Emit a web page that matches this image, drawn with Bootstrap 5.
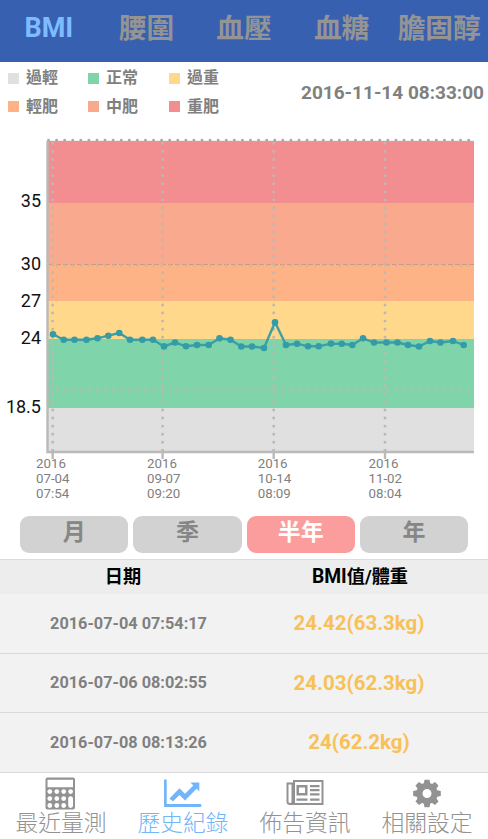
<!DOCTYPE html>
<html lang="zh-Hant">
<head>
<meta charset="utf-8">
<meta name="viewport" content="width=device-width, initial-scale=1">
<title>BMI</title>
<link href="https://cdn.jsdelivr.net/npm/bootstrap@5.3.0/dist/css/bootstrap.min.css" rel="stylesheet">
<style>
body{font-family:Roboto,"Noto Sans CJK TC",sans-serif;background:#fff;color:#808080;height:839px;overflow:hidden}
.top-tabs{height:62px;background:#3860b1;font-size:27.7px;line-height:57px}
.top-tabs .nav-link{width:97.7px;color:#949494;font-weight:700;padding:0}
.top-tabs .nav-link.active{color:#7dbcff;font-size:27px}
.info{height:68px}
.legend{display:grid;grid-template-columns:80px 81px 60px;grid-auto-rows:28.5px;padding:2px 0 0 8px;font-size:16px;font-weight:700}
.swatch{width:11px;height:11px;margin-right:7px}
.swatch.under{background:#e0e0e0}
.swatch.normal{background:#80d4a9}
.swatch.over{background:#ffd88b}
.swatch.mild{background:#fdb385}
.swatch.moderate{background:#f9aa8e}
.swatch.severe{background:#f28d90}
.stamp{font-size:19px;padding-right:4px;padding-top:17px}
.chart{height:380px}
.range{height:49px;padding:6px 20px 0;gap:5px}
.range .btn{width:108.5px;height:37px;border-radius:9px;background:#d2d2d2;color:#868686;font-size:23px;font-weight:700;line-height:28px;padding:0 0 3px;border:0}
.range .btn.active{background:#fb9d9d;color:#fff}
.list-head{height:35px;background:#ededed;border-top:1px solid #d9dddd;color:#000;font-size:18.2px;font-weight:700;line-height:33px}
.head-day{width:246px}
.head-val{width:242px;padding-right:14px}
.latin{font-size:19.3px}
.entry{height:59.5px;background:#f2f2f2;border-bottom:1px solid #d9d9d9;padding-top:1px}
.day{width:246px;padding-left:11px;font-size:16.3px;font-weight:700}
.val{width:242px;padding-right:16px;font-size:20.5px;font-weight:700;color:#f8c157}
.tabbar{height:67px;font-size:22.8px;font-weight:300;line-height:27px}
.tabbar a{width:122px;color:#929292;text-decoration:none;padding-top:4px}
.tabbar a.active{color:#72b6f9}
.tabbar svg{width:40px;height:33px;display:block}
</style>
</head>
<body>
<nav class="top-tabs nav flex-nowrap text-center text-nowrap">
<a class="nav-link active" href="#">BMI</a><a class="nav-link" href="#">腰圍</a><a class="nav-link" href="#">血壓</a><a class="nav-link" href="#">血糖</a><a class="nav-link" href="#">膽固醇</a>
</nav>
<section class="info d-flex justify-content-between">
<div class="legend">
<div class="d-flex align-items-center"><span class="swatch under"></span>過輕</div>
<div class="d-flex align-items-center"><span class="swatch normal"></span>正常</div>
<div class="d-flex align-items-center"><span class="swatch over"></span>過重</div>
<div class="d-flex align-items-center"><span class="swatch mild"></span>輕肥</div>
<div class="d-flex align-items-center"><span class="swatch moderate"></span>中肥</div>
<div class="d-flex align-items-center"><span class="swatch severe"></span>重肥</div>
</div>
<div class="stamp fw-bold text-nowrap">2016-11-14 08:33:00</div>
</section>
<svg class="chart d-block w-100" viewBox="0 130 488 380">
<g shape-rendering="crispEdges">
<path fill="#f28d90" d="M48 141h426v62H48z"/>
<path fill="#f9aa8e" d="M48 203h426v61H48z"/>
<path fill="#fdb385" d="M48 264h426v37H48z"/>
<path fill="#ffd88b" d="M48 301h426v38H48z"/>
<path fill="#80d4a9" d="M48 339h426v69H48z"/>
<path fill="#e0e0e0" d="M48 408h426v43H48z"/>
</g>
<path d="M47 141.3H474" stroke="#b5adad"/>
<path d="M49 264.5H474" stroke="#c48f78" stroke-dasharray="5 2" stroke-width=".8"/>
<g fill="none" stroke="#bcb8b4" stroke-width="2.9" stroke-linecap="round" stroke-dasharray="0.01 8.07">
<path d="M48.5 140.3H474" stroke="#a9a9a9"/>
<path d="M56.8 265.500H474" stroke-opacity=".7"/>
<path d="M56.8 389.800H474" stroke="#b5bdae"/>
<path d="M52.7 450.4V141M162.6 450.4V141M273.7 450.4V141M385 450.4V141"/>
</g>
<path d="M47.5 141V452H474" fill="none" stroke="#bababa" stroke-width="2.4"/>
<path d="M52.7 449v10M162.6 449v10M273.7 449v10M385 449v10" stroke="#bababa" stroke-width="2.4"/>
<polyline id="line" fill="none" stroke="#3d9ea3" stroke-width="2.4" stroke-linejoin="round" points="53,334.2 63.7,339.7 74.5,339.7 86.5,339.7 97.5,338.3 108.3,335.7 119.3,333 130,339.7 142.3,339.7 153,339.7 164,346.4 175,342.5 186,346.3 197,345 208.7,345 219.5,338.3 230.5,339.7 241.3,346.5 252,346.5 264,348 275,322.3 286,345 297,343.7 308,346.3 318.7,346.3 331,343.6 341.7,343.7 352.3,345 363,338.3 374,342.5 386.5,342.5 397.5,342.5 408,345 419,346.5 430,341 440.5,342.5 453,341 463.7,345"/>
<g id="dots" fill="#349ba8"></g>
<g font-size="18" fill="#111" text-anchor="end">
<text x="41" y="207">35</text><text x="41" y="269.5">30</text><text x="41" y="307">27</text><text x="41" y="344">24</text><text x="41" y="412.5">18.5</text>
</g>
<g font-size="13.3" fill="#808080">
<text x="36" y="468">2016</text><text x="36" y="483">07-04</text><text x="36" y="498">07:54</text>
<text x="147" y="468">2016</text><text x="147" y="483">09-07</text><text x="147" y="498">09:20</text>
<text x="257.7" y="468">2016</text><text x="257.7" y="483">10-14</text><text x="257.7" y="498">08:09</text>
<text x="368.5" y="468">2016</text><text x="368.5" y="483">11-02</text><text x="368.5" y="498">08:04</text>
</g>
</svg>
<div class="range d-flex">
<button class="btn">月</button><button class="btn">季</button><button class="btn active">半年</button><button class="btn">年</button>
</div>
<div class="list-head d-flex text-center"><div class="head-day">日期</div><div class="head-val"><span class="latin">BMI</span>值/體重</div></div>
<div class="entry d-flex align-items-center text-center"><div class="day">2016-07-04 07:54:17</div><div class="val">24.42(63.3kg)</div></div>
<div class="entry d-flex align-items-center text-center"><div class="day">2016-07-06 08:02:55</div><div class="val">24.03(62.3kg)</div></div>
<div class="entry d-flex align-items-center text-center"><div class="day">2016-07-08 08:13:26</div><div class="val">24(62.2kg)</div></div>
<nav class="tabbar d-flex text-nowrap">
<a href="#" class="d-flex flex-column align-items-center"><svg viewBox="0 0 40 33"><path fill="currentColor" fill-rule="evenodd" d="M6.500 0.500h25.500q2 0 2 2v28q0 2-2 2H6.500q-2 0-2-2v-28q0-2 2-2zM6.500 2.800v7.500h25.500v-7.500z"/><g fill="#fff"><circle cx="8.800" cy="14.600" r="2.400"/><circle cx="15.800" cy="14.600" r="2.400"/><circle cx="22.700" cy="14.600" r="2.400"/><circle cx="29.600" cy="14.600" r="2.400"/><circle cx="8.800" cy="21.600" r="2.400"/><circle cx="15.800" cy="21.600" r="2.400"/><circle cx="22.700" cy="21.600" r="2.400"/><circle cx="8.800" cy="28.500" r="2.400"/><circle cx="15.800" cy="28.500" r="2.400"/><circle cx="22.700" cy="28.500" r="2.400"/><rect x="27.200" y="19.200" width="4.800" height="11.700" rx="2.400"/></g></svg>最近量測</a>
<a href="#" class="active d-flex flex-column align-items-center"><svg viewBox="0 0 40 33"><path fill="currentColor" d="M1 2.500h2.700V27h34.500v3H1zM6.300 21.700L16.500 11.300l5.500 5.500 8.300-8.400-2.800-2.800h8.800v8.800l-2.700-2.600-11.600 11.600-5.500-5.500-6.400 6.400z"/></svg>歷史紀錄</a>
<a href="#" class="d-flex flex-column align-items-center"><svg viewBox="0 0 40 33"><path fill="currentColor" fill-rule="evenodd" d="M8 3h30.500v25H5q-3.500 0-3.500-3.500V5.500H8zM10 5v21h26.500V5zM3.500 7.500v17q0 1.500 1.500 1.500t1.500-1.500v-17zM11.500 8h11v10.500h-11zM14 10.500V16h6v-5.500zM25 8h9.500v2.300H25zM25 12h9.500v2.300H25zM25 16.200h9.500v2.300H25zM11.500 21.500h11v2.300h-11zM25 21.500h9.500v2.300H25z"/></svg>佈告資訊</a>
<a href="#" class="d-flex flex-column align-items-center"><svg viewBox="0 0 40 33"><g transform="translate(20 16.500)" fill="currentColor"><circle r="7.600" fill="none" stroke="currentColor" stroke-width="6.200"/><path id="tooth" d="M-3.400-9l.9-4.800h5L3.400-9z"/><use href="#tooth" transform="rotate(45)"/><use href="#tooth" transform="rotate(90)"/><use href="#tooth" transform="rotate(135)"/><use href="#tooth" transform="rotate(180)"/><use href="#tooth" transform="rotate(225)"/><use href="#tooth" transform="rotate(270)"/><use href="#tooth" transform="rotate(315)"/></g></svg>相關設定</a>
</nav>
<script src="https://cdn.jsdelivr.net/npm/bootstrap@5.3.0/dist/js/bootstrap.bundle.min.js"></script>
<script>
const dots=document.getElementById('dots');
for(const p of document.getElementById('line').points){
  const c=document.createElementNS('http://www.w3.org/2000/svg','circle');
  c.setAttribute('cx',p.x);c.setAttribute('cy',p.y);c.setAttribute('r',3.3);dots.append(c);
}
</script>
</body>
</html>
